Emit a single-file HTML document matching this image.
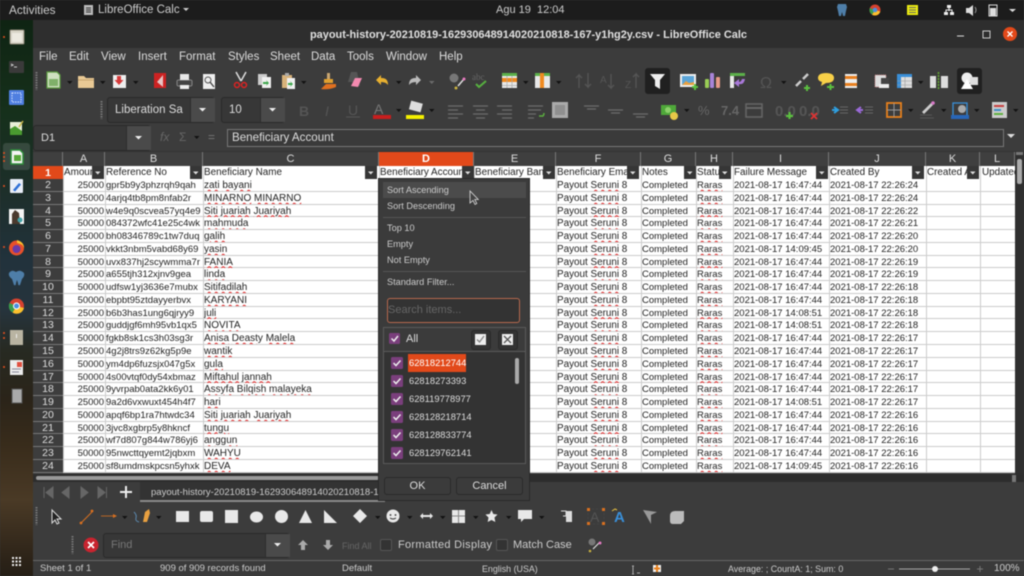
<!DOCTYPE html>
<html><head><meta charset="utf-8"><title>LibreOffice Calc</title>
<style>
html,body{margin:0;padding:0;background:#3a3a3a}
#p{position:relative;width:1024px;height:576px;overflow:hidden;font-family:"Liberation Sans",sans-serif;background:#3c3c3c;filter:blur(.4px)}
#p div,#p span{position:absolute;white-space:nowrap}
.m{top:50px;font-size:11.5px;color:#ddd;line-height:14px}
.bx{background:#373737;border:1px solid #2a2a2a;border-radius:3px;box-sizing:border-box}
.ar{background:#4a4a4a;border-left:1px solid #2d2d2d}
.ch{top:152px;height:14px;background:#3f3f3f;color:#ddd;font-size:11px;line-height:15px;text-align:center;box-sizing:border-box;border-right:1px solid #777}
.r{left:33px;width:982px;height:12.77px;background:#fff;box-shadow:inset 0 -1px 0 #ccc;font-size:9.5px;line-height:13px;color:#222}
.r span{top:0;height:12px;overflow:hidden}
.r .n{left:0;width:30px;height:12.77px;background:#3d3d3d;box-shadow:inset 0 -1px 0 #777;color:#ddd;text-align:center;font-size:10.5px}
.r .a{left:30px;width:41px;text-align:right}
.r .b{left:73px;width:97px}
.r .c{left:171px;width:170px;font-size:10px}
.r .f{left:524px;width:80px;font-size:9.9px}
.r .g{left:609px;width:54px}
.r .h{left:664px;width:35px}
.r .i{left:701px;width:94px}
.r .j{left:797px;width:95px}
.r u{text-decoration:underline wavy #e02020 1px;text-underline-offset:1px}
.v{top:166px;height:307px;width:1px;background:#ccc}
.h1{top:166px;height:13px;font-size:9.9px;line-height:14px;color:#222;background:#fff;overflow:hidden}
.fb{top:166px;width:12px;height:13px;background:#363636}
.pi{left:387px;font-size:9.2px;color:#ccc;line-height:12px}
.li{left:409px;font-size:9.4px;color:#ddd;line-height:12px}
.s{top:563px;font-size:9.5px;color:#ccc;line-height:12px}
</style></head><body><div id="p">

<!-- wallpaper dock -->
<div style="left:0;top:20px;width:33px;height:556px;background:linear-gradient(180deg,#0f2413 0,#16301b 90px,#1d2f2a 170px,#22323c 240px,#26343d 290px,#272a22 330px,#2b2419 380px,#3a2d1c 430px,#4a3a26 480px,#2c2318 540px,#1d1a14 576px)"></div>
<!-- top bar -->
<div style="left:0;top:0;width:1024px;height:20px;background:#1c1c1c"></div>
<div style="left:9px;top:3px;font-size:11.8px;color:#ccc;line-height:14px">Activities</div>
<div style="left:98px;top:3px;font-size:11.5px;color:#ccc;line-height:14px">LibreOffice Calc</div>
<div style="left:496px;top:3px;font-size:11px;color:#ccc;line-height:14px">Agu 19&nbsp;&nbsp;12:04</div>
<!-- title -->
<div style="left:33px;top:20px;width:991px;height:28px;background:#2e2e2e"></div>
<div style="left:310px;top:27.500px;font-size:10.95px;font-weight:bold;color:#e0e0e0;line-height:14px">payout-history-20210819-162930648914020210818-167-y1hg2y.csv - LibreOffice Calc</div>
<!-- menu -->
<div class="m" style="left:39px">File</div><div class="m" style="left:69px">Edit</div><div class="m" style="left:101px">View</div><div class="m" style="left:138px">Insert</div><div class="m" style="left:179px">Format</div><div class="m" style="left:228px">Styles</div><div class="m" style="left:270px">Sheet</div><div class="m" style="left:311px">Data</div><div class="m" style="left:347px">Tools</div><div class="m" style="left:386px">Window</div><div class="m" style="left:439px">Help</div>

<!-- font boxes -->
<div class="bx" style="left:107px;top:97px;width:108px;height:26px"></div><div class="ar" style="left:190px;top:98px;width:24px;height:24px"></div>
<div style="left:115px;top:103px;font-size:11.5px;color:#ddd;line-height:14px">Liberation Sa</div>
<div class="bx" style="left:221px;top:97px;width:64px;height:26px"></div><div class="ar" style="left:260px;top:98px;width:24px;height:24px"></div>
<div style="left:229px;top:103px;font-size:11.5px;color:#ddd;line-height:14px">10</div>
<!-- formula bar -->
<div class="bx" style="left:33px;top:125px;width:118px;height:26px"></div><div class="ar" style="left:126px;top:126px;width:24px;height:24px"></div>
<div style="left:41px;top:131px;font-size:11px;color:#ddd;line-height:14px">D1</div>
<div style="left:160px;top:130px;font-size:12px;font-style:italic;color:#666;line-height:14px">fx</div>
<div style="left:179px;top:130px;font-size:12px;color:#666;line-height:14px">Σ</div>
<div style="left:208px;top:130px;font-size:12px;color:#777;line-height:14px">=</div>
<div style="left:227px;top:129px;width:777px;height:18px;border:1px solid #777;box-sizing:border-box;background:#3a3a3a;font-size:11.6px;color:#ddd;line-height:16px;padding-left:4px">Beneficiary Account</div>

<!-- grid -->
<div style="left:33px;top:151px;width:991px;height:323px;background:#333"></div>
<div style="left:33px;top:152px;width:30px;height:14px;background:#3f3f3f;border-right:1px solid #777;box-sizing:border-box"></div>
<div class="ch" style="left:63px;width:42px">A</div><div class="ch" style="left:105px;width:98px">B</div><div class="ch" style="left:203px;width:176px">C</div><div class="ch" style="left:379px;width:95px;background:#e2491a;color:#fff;font-weight:bold">D</div><div class="ch" style="left:474px;width:82px">E</div><div class="ch" style="left:556px;width:85px">F</div><div class="ch" style="left:641px;width:55px">G</div><div class="ch" style="left:696px;width:37px">H</div><div class="ch" style="left:733px;width:96px">I</div><div class="ch" style="left:829px;width:97px">J</div><div class="ch" style="left:926px;width:54px">K</div><div class="ch" style="left:980px;width:35px">L</div>
<div style="left:33px;top:166px;width:30px;height:13px;background:#e2491a;color:#fff;font-weight:bold;font-size:10.5px;line-height:14px;text-align:center">1</div>
<div style="left:63px;top:166px;width:952px;height:13px;background:#fff"></div>
<div class="h1" style="left:64px;width:28px">Amount</div><div class="h1" style="left:106px;width:84px">Reference No</div><div class="h1" style="left:204px;width:160px">Beneficiary Name</div><div class="h1" style="left:380px;width:82px">Beneficiary Account</div><div class="h1" style="left:475px;width:68px">Beneficiary Bank</div><div class="h1" style="left:557px;width:70px">Beneficiary Email</div><div class="h1" style="left:642px;width:42px">Notes</div><div class="h1" style="left:697px;width:22px">Status</div><div class="h1" style="left:734px;width:82px">Failure Message</div><div class="h1" style="left:830px;width:82px">Created By</div><div class="h1" style="left:927px;width:40px">Created At</div><div class="h1" style="left:982px;width:33px">Updated At</div>
<div class="fb" style="left:92px"></div><div class="fb" style="left:190px"></div><div class="fb" style="left:365px"></div><div class="fb" style="left:462px"></div><div class="fb" style="left:543px"></div><div class="fb" style="left:627px"></div><div class="fb" style="left:684px"></div><div class="fb" style="left:719px"></div><div class="fb" style="left:816px"></div><div class="fb" style="left:912px"></div><div class="fb" style="left:967px"></div>

<div class="r" style="top:179px"><span class="n">2</span><span class="a">25000</span><span class="b">gpr5b9y3phzrqh9qah</span><span class="c"><u>zati</u> <u>bayani</u></span><span class="f">Payout <u>Seruni</u> 8</span><span class="g">Completed</span><span class="h"><u>Raras</u></span><span class="i">2021-08-17 16:47:44</span><span class="j">2021-08-17 22:26:24</span></div>
<div class="r" style="top:191.77px"><span class="n">3</span><span class="a">25000</span><span class="b">4arjq4tb8pm8nfab2r</span><span class="c"><u>MINARNO</u> <u>MINARNO</u></span><span class="f">Payout <u>Seruni</u> 8</span><span class="g">Completed</span><span class="h"><u>Raras</u></span><span class="i">2021-08-17 16:47:44</span><span class="j">2021-08-17 22:26:24</span></div>
<div class="r" style="top:204.54px"><span class="n">4</span><span class="a">50000</span><span class="b">w4e9q0scvea57yq4e9</span><span class="c"><u>Siti</u> <u>juariah</u> <u>Juariyah</u></span><span class="f">Payout <u>Seruni</u> 8</span><span class="g">Completed</span><span class="h"><u>Raras</u></span><span class="i">2021-08-17 16:47:44</span><span class="j">2021-08-17 22:26:22</span></div>
<div class="r" style="top:217.31px"><span class="n">5</span><span class="a">50000</span><span class="b">084372wfc41e25c4wk</span><span class="c"><u>mahmuda</u></span><span class="f">Payout <u>Seruni</u> 8</span><span class="g">Completed</span><span class="h"><u>Raras</u></span><span class="i">2021-08-17 16:47:44</span><span class="j">2021-08-17 22:26:21</span></div>
<div class="r" style="top:230.08px"><span class="n">6</span><span class="a">25000</span><span class="b">bh08346789c1tw7duq</span><span class="c"><u>galih</u></span><span class="f">Payout <u>Seruni</u> 8</span><span class="g">Completed</span><span class="h"><u>Raras</u></span><span class="i">2021-08-17 16:47:44</span><span class="j">2021-08-17 22:26:20</span></div>
<div class="r" style="top:242.85px"><span class="n">7</span><span class="a">25000</span><span class="b">vkkt3nbm5vabd68y69</span><span class="c"><u>yasin</u></span><span class="f">Payout <u>Seruni</u> 8</span><span class="g">Completed</span><span class="h"><u>Raras</u></span><span class="i">2021-08-17 14:09:45</span><span class="j">2021-08-17 22:26:20</span></div>
<div class="r" style="top:255.62px"><span class="n">8</span><span class="a">50000</span><span class="b">uvx837hj2scywmma7r</span><span class="c"><u>FANIA</u></span><span class="f">Payout <u>Seruni</u> 8</span><span class="g">Completed</span><span class="h"><u>Raras</u></span><span class="i">2021-08-17 16:47:44</span><span class="j">2021-08-17 22:26:19</span></div>
<div class="r" style="top:268.39px"><span class="n">9</span><span class="a">25000</span><span class="b">a655tjh312xjnv9gea</span><span class="c"><u>linda</u></span><span class="f">Payout <u>Seruni</u> 8</span><span class="g">Completed</span><span class="h"><u>Raras</u></span><span class="i">2021-08-17 16:47:44</span><span class="j">2021-08-17 22:26:19</span></div>
<div class="r" style="top:281.16px"><span class="n">10</span><span class="a">50000</span><span class="b">udfsw1yj3636e7mubx</span><span class="c"><u>Sitifadilah</u></span><span class="f">Payout <u>Seruni</u> 8</span><span class="g">Completed</span><span class="h"><u>Raras</u></span><span class="i">2021-08-17 16:47:44</span><span class="j">2021-08-17 22:26:18</span></div>
<div class="r" style="top:293.93px"><span class="n">11</span><span class="a">50000</span><span class="b">ebpbt95ztdayyerbvx</span><span class="c"><u>KARYANI</u></span><span class="f">Payout <u>Seruni</u> 8</span><span class="g">Completed</span><span class="h"><u>Raras</u></span><span class="i">2021-08-17 16:47:44</span><span class="j">2021-08-17 22:26:18</span></div>
<div class="r" style="top:306.7px"><span class="n">12</span><span class="a">25000</span><span class="b">b6b3has1ung6qjryy9</span><span class="c"><u>juli</u></span><span class="f">Payout <u>Seruni</u> 8</span><span class="g">Completed</span><span class="h"><u>Raras</u></span><span class="i">2021-08-17 14:08:51</span><span class="j">2021-08-17 22:26:18</span></div>
<div class="r" style="top:319.47px"><span class="n">13</span><span class="a">25000</span><span class="b">guddjgf6mh95vb1qx5</span><span class="c"><u>NOVITA</u></span><span class="f">Payout <u>Seruni</u> 8</span><span class="g">Completed</span><span class="h"><u>Raras</u></span><span class="i">2021-08-17 14:08:51</span><span class="j">2021-08-17 22:26:18</span></div>
<div class="r" style="top:332.24px"><span class="n">14</span><span class="a">50000</span><span class="b">fgkb8sk1cs3h03sg3r</span><span class="c"><u>Anisa</u> <u>Deasty</u> <u>Malela</u></span><span class="f">Payout <u>Seruni</u> 8</span><span class="g">Completed</span><span class="h"><u>Raras</u></span><span class="i">2021-08-17 16:47:44</span><span class="j">2021-08-17 22:26:17</span></div>
<div class="r" style="top:345.01px"><span class="n">15</span><span class="a">25000</span><span class="b">4g2j8trs9z62kg5p9e</span><span class="c"><u>wantik</u></span><span class="f">Payout <u>Seruni</u> 8</span><span class="g">Completed</span><span class="h"><u>Raras</u></span><span class="i">2021-08-17 16:47:44</span><span class="j">2021-08-17 22:26:17</span></div>
<div class="r" style="top:357.78px"><span class="n">16</span><span class="a">50000</span><span class="b">ym4dp6fuzsjx047g5x</span><span class="c"><u>gula</u></span><span class="f">Payout <u>Seruni</u> 8</span><span class="g">Completed</span><span class="h"><u>Raras</u></span><span class="i">2021-08-17 16:47:44</span><span class="j">2021-08-17 22:26:17</span></div>
<div class="r" style="top:370.55px"><span class="n">17</span><span class="a">50000</span><span class="b">4s00vtqf0dy54xbmaz</span><span class="c"><u>Miftahul</u> <u>jannah</u></span><span class="f">Payout <u>Seruni</u> 8</span><span class="g">Completed</span><span class="h"><u>Raras</u></span><span class="i">2021-08-17 16:47:44</span><span class="j">2021-08-17 22:26:17</span></div>
<div class="r" style="top:383.32px"><span class="n">18</span><span class="a">25000</span><span class="b">9yvrpab0ata2kk6y01</span><span class="c"><u>Assyfa</u> <u>Bilqish</u> <u>malayeka</u></span><span class="f">Payout <u>Seruni</u> 8</span><span class="g">Completed</span><span class="h"><u>Raras</u></span><span class="i">2021-08-17 16:47:44</span><span class="j">2021-08-17 22:26:17</span></div>
<div class="r" style="top:396.09px"><span class="n">19</span><span class="a">25000</span><span class="b">9a2d6vxwuxt454h4f7</span><span class="c"><u>hari</u></span><span class="f">Payout <u>Seruni</u> 8</span><span class="g">Completed</span><span class="h"><u>Raras</u></span><span class="i">2021-08-17 14:08:51</span><span class="j">2021-08-17 22:26:17</span></div>
<div class="r" style="top:408.86px"><span class="n">20</span><span class="a">50000</span><span class="b">apqf6bp1ra7htwdc34</span><span class="c"><u>Siti</u> <u>juariah</u> <u>Juariyah</u></span><span class="f">Payout <u>Seruni</u> 8</span><span class="g">Completed</span><span class="h"><u>Raras</u></span><span class="i">2021-08-17 16:47:44</span><span class="j">2021-08-17 22:26:16</span></div>
<div class="r" style="top:421.63px"><span class="n">21</span><span class="a">50000</span><span class="b">3jvc8xgbrp5y8hkncf</span><span class="c"><u>tungu</u></span><span class="f">Payout <u>Seruni</u> 8</span><span class="g">Completed</span><span class="h"><u>Raras</u></span><span class="i">2021-08-17 16:47:44</span><span class="j">2021-08-17 22:26:16</span></div>
<div class="r" style="top:434.4px"><span class="n">22</span><span class="a">25000</span><span class="b">wf7d807g844w786yj6</span><span class="c"><u>anggun</u></span><span class="f">Payout <u>Seruni</u> 8</span><span class="g">Completed</span><span class="h"><u>Raras</u></span><span class="i">2021-08-17 16:47:44</span><span class="j">2021-08-17 22:26:16</span></div>
<div class="r" style="top:447.17px"><span class="n">23</span><span class="a">50000</span><span class="b">95nwcttqyemt2jqbxm</span><span class="c"><u>WAHYU</u></span><span class="f">Payout <u>Seruni</u> 8</span><span class="g">Completed</span><span class="h"><u>Raras</u></span><span class="i">2021-08-17 16:47:44</span><span class="j">2021-08-17 22:26:16</span></div>
<div class="r" style="top:459.94px"><span class="n">24</span><span class="a">25000</span><span class="b">sf8umdmskpcsn5yhxk</span><span class="c"><u>DEVA</u></span><span class="f">Payout <u>Seruni</u> 8</span><span class="g">Completed</span><span class="h"><u>Raras</u></span><span class="i">2021-08-17 14:09:45</span><span class="j">2021-08-17 22:26:16</span></div>
<div style="left:33px;top:472.7px;width:982px;height:1.3px;background:#3d3d3d"></div>

<div class="v" style="left:63px"></div><div class="v" style="left:105px"></div><div class="v" style="left:203px"></div><div class="v" style="left:379px"></div><div class="v" style="left:474px"></div><div class="v" style="left:556px"></div><div class="v" style="left:641px"></div><div class="v" style="left:696px"></div><div class="v" style="left:733px"></div><div class="v" style="left:829px"></div><div class="v" style="left:926px"></div><div class="v" style="left:980px"></div>
<!-- v scrollbar -->
<div style="left:1015px;top:152px;width:9px;height:322px;background:#2f2f2f"></div>
<div style="left:1017px;top:159px;width:5px;height:25px;background:#aaa;border-radius:2px"></div>
<div style="left:1016px;top:152px;width:7px;height:3px;background:#777"></div>

<!-- bottom area -->
<div style="left:33px;top:474px;width:991px;height:8px;background:#2d2d2d"></div>
<div style="left:36px;top:476px;width:343px;height:4px;background:#999;border-radius:2px"></div>
<div style="left:1012px;top:475px;width:4px;height:7px;background:#777"></div>
<div style="left:33px;top:482px;width:991px;height:78px;background:#3c3c3c"></div>
<div style="left:140px;top:482px;width:245px;height:18px;background:#333"></div>
<div style="left:140px;top:500px;width:245px;height:2px;background:#8a8a8a"></div>
<div style="left:151px;top:486.500px;font-size:9.5px;color:#ccc;line-height:12px;width:228px;overflow:hidden">payout-history-20210819-162930648914020210818-167-y1hg2y.csv</div>
<!-- find box -->
<div class="bx" style="left:103px;top:533px;width:187px;height:25px"></div><div class="ar" style="left:265px;top:534px;width:24px;height:23px"></div>
<div style="left:111px;top:539px;font-size:11px;color:#777;line-height:13px">Find</div>
<div style="left:342px;top:540px;font-size:9px;color:#666;line-height:12px">Find All</div>
<div style="left:380px;top:539px;width:12px;height:12px;background:#333;border:1px solid #555;box-sizing:border-box;border-radius:2px"></div>
<div style="left:398px;top:539px;font-size:11px;letter-spacing:.3px;color:#ccc;line-height:13px">Formatted Display</div>
<div style="left:496px;top:539px;width:12px;height:12px;background:#333;border:1px solid #555;box-sizing:border-box;border-radius:2px"></div>
<div style="left:513px;top:539px;font-size:11px;color:#ccc;line-height:13px">Match Case</div>
<!-- status -->
<div style="left:33px;top:560px;width:991px;height:1px;background:#666"></div>
<div style="left:33px;top:561px;width:991px;height:15px;background:#3a3a3a"></div>
<div class="s" style="left:40px">Sheet 1 of 1</div><div class="s" style="left:160px">909 of 909 records found</div><div class="s" style="left:342px">Default</div><div class="s" style="left:482px;font-size:8.9px">English (USA)</div><div class="s" style="left:728px;font-size:8.9px">Average: ; CountA: 1; Sum: 0</div><div class="s" style="left:994px;font-size:10px">100%</div>

<!-- icons -->
<svg width="1024" height="576" viewBox="0 0 1024 576" style="position:absolute;left:0;top:0">
<defs><path id="d" d="M0 0h5.5l-2.75 3z" fill="#111"/><path id="a" d="M0 0h5.5l-2.75 3z" fill="#ddd"/><path id="w" d="M0 0h7l-3.5 3.5z" fill="#eee"/></defs>
<!-- top bar -->
<rect x="84" y="5" width="9" height="10" fill="#bbb"/><path d="M86 8h5M86 10h5M86 12h5" stroke="#333"/>
<path d="M183 8h6l-3 3z" fill="#ccc"/>
<path d="M838 4h8l1 3-1 4-1 5h-2l-1-4-1 4h-2l-1-5-1-4z" fill="#4e7ea8"/>
<circle cx="875" cy="10" r="5.5" fill="#d6422f"/><path d="M875 10L880.300 11.500A5.500 5.500 0 0 1 872 14.600z" fill="#fbc02d"/><path d="M875 10L872 14.600A5.500 5.500 0 0 1 869.800 8z" fill="#3a9d4c"/><circle cx="875" cy="10" r="2.300" fill="#4a8fe0"/>
<rect x="907" y="5" width="11" height="10" fill="#ecec10"/><path d="M909 7.500h7M909 10h7M909 12.500h7" stroke="#666"/>
<path d="M947 5h4v3h-4zM944 12h4v3h-4zM950 12h4v3h-4zM946 10h6" fill="#eee"/><path d="M949 8v3M946 12v-2h6v2" stroke="#eee" fill="none"/>
<path d="M966 8h3l4-3v11l-4-3h-3z" fill="#ddd"/><path d="M975 7q2 3 0 6" stroke="#999" fill="none"/>
<rect x="989" y="5" width="8" height="11" fill="none" stroke="#ddd"/><rect x="990" y="8" width="6" height="8" fill="#ddd"/><path d="M1009 9h7l-3.500 3z" fill="#ddd"/>
<!-- window buttons -->
<path d="M957 36h7" stroke="#ddd"/><rect x="983" y="31" width="7" height="7" fill="none" stroke="#ccc"/>
<circle cx="1010" cy="34" r="7" fill="#e2491a"/><path d="M1007.500 31.500l5 5M1012.500 31.500l-5 5" stroke="#fff" stroke-width="1.300"/>
<!-- dock -->
<rect x="3" y="143" width="27" height="27" rx="3" fill="#fff" opacity=".13"/>
<g fill="#e8501f"><circle cx="4" cy="37" r="1"/><circle cx="4" cy="153" r="1"/><circle cx="4" cy="157" r="1"/><circle cx="4" cy="161" r="1"/><circle cx="4" cy="186" r="1"/><circle cx="4" cy="247" r="1"/><circle cx="4" cy="333" r="1"/><circle cx="4" cy="338" r="1"/><circle cx="4" cy="367" r="1"/></g>
<rect x="10" y="30" width="14" height="14" rx="1" fill="#d9d5c8" stroke="#8c8676"/><rect x="12" y="33" width="10" height="9" fill="#ece9df"/>
<rect x="9" y="61" width="15" height="12" rx="1" fill="#3a3a3a"/><path d="M11 64l2 1-2 1M14 67h3" stroke="#ccc" fill="none"/>
<rect x="9" y="90" width="15" height="15" rx="1" fill="#4f7fe0"/><rect x="12" y="93" width="9" height="9" fill="none" stroke="#cfe0ff" stroke-dasharray="1.500 1"/>
<path d="M10 122h12v13H10z" fill="#e8efd8"/><path d="M10 135v-6l5-3 7 5v4z" fill="#4a9a30"/><path d="M19 127l4-6" stroke="#c9b84a" stroke-width="1.500"/>
<path d="M11 150h9l3 3v11H11z" fill="#f4f4f4" stroke="#2f8f3b" stroke-width="1.500"/><rect x="14" y="155" width="7" height="6" fill="#57a83a"/>
<rect x="10" y="179" width="13" height="14" rx="1" fill="#e8eef8"/><path d="M13 190l6-7 2 1.500-6 7z" fill="#2d6fd6"/>
<rect x="9" y="209" width="15" height="15" fill="#f4f4f4"/><path d="M12 224v-10l3-4 4 3 1 11z" fill="#4a3a2e"/><circle cx="20" cy="220" r="2.500" fill="#45a3a8"/>
<circle cx="16.500" cy="248" r="7.500" fill="#e8502a"/><circle cx="16.500" cy="249" r="4" fill="#6a3aa8"/><path d="M17 240q7 2 7 8-1-4-7-5z" fill="#fbbf2d"/>
<path d="M9 273q3-4 7-1 4-3 8 1 1 3-2 6-1 3-2 6-2 1-2-2l-1-3-1 3q0 3-2 2-1-3-2-6-4-3-3-6z" fill="#4e7ea8"/>
<circle cx="16.500" cy="306" r="7.500" fill="#d6422f"/><path d="M16.500 306L24 308A7.500 7.500 0 0 1 12.500 312.500z" fill="#fbc02d"/><path d="M16.500 306L12.500 312.500A7.500 7.500 0 0 1 9.500 303z" fill="#3a9d4c"/><circle cx="16.500" cy="306" r="3" fill="#4a8fe0" stroke="#fff"/>
<rect x="10" y="330" width="13" height="15" fill="#b9b4a2"/><path d="M16.500 334v4" stroke="#eee"/>
<rect x="10" y="360" width="13" height="15" fill="#ececec"/><rect x="17" y="362" width="5" height="5" fill="#e05040"/><path d="M12 369h9M12 372h7" stroke="#889"/>
<rect x="12" y="389" width="10" height="14" fill="#aaa" stroke="#555"/>
<g fill="#eee"><rect x="12" y="557" width="2" height="2"/><rect x="15.500" y="557" width="2" height="2"/><rect x="19" y="557" width="2" height="2"/><rect x="12" y="560.500" width="2" height="2"/><rect x="15.500" y="560.500" width="2" height="2"/><rect x="19" y="560.500" width="2" height="2"/><rect x="12" y="564" width="2" height="2"/><rect x="15.500" y="564" width="2" height="2"/><rect x="19" y="564" width="2" height="2"/></g>
<!-- grips -->
<path d="M36.500 72v18M101.500 101v18M72.500 536v18M36.500 507v18" stroke="#777" stroke-width="2" stroke-dasharray="1.500 1"/>
<!-- row 1 -->
<path d="M47 72h10l3 3v13H47z" fill="#cfe0c0" stroke="#5b9a3f" stroke-width="1.200"/><rect x="49" y="79" width="9" height="7" fill="#7fb069"/>
<use href="#d" x="67" y="81"/>
<path d="M78 76h6l2 2h8v10H78z" fill="#e9c995"/><path d="M78 80h16" stroke="#c9a670"/>
<use href="#d" x="100" y="81"/>
<rect x="113" y="75" width="13" height="13" fill="#eee"/><path d="M117 76h4v4h2.500l-4.500 5-4.500-5h2.500z" fill="#d53a3a"/>
<use href="#d" x="133" y="81"/>
<path d="M154 73h12v15h-12z" fill="#c22"/><path d="M157 82l6-7v12z" fill="#eee" opacity=".8"/>
<rect x="177" y="80" width="15" height="6" rx="1" fill="#444" stroke="#ccc" stroke-width=".5"/><rect x="180" y="74" width="9" height="6" fill="#e8e8e8"/><rect x="180" y="85" width="9" height="4" fill="#eee"/>
<rect x="203" y="74" width="12" height="15" fill="#eee"/><circle cx="208" cy="80" r="3" fill="none" stroke="#555"/><path d="M210 82l4 5" stroke="#444" stroke-width="1.400"/>
<path d="M236 72l5 9M246 72l-5 9" stroke="#ddd" stroke-width="1.500"/><circle cx="237" cy="85" r="2.500" fill="none" stroke="#d22" stroke-width="1.500"/><circle cx="244" cy="85" r="2.500" fill="none" stroke="#d22" stroke-width="1.500"/>
<rect x="258" y="74" width="9" height="11" fill="#ccc"/><rect x="262" y="77" width="9" height="11" fill="#f0f0f0"/><path d="M263 82h4l-1-2 3 3-3 3 1-2h-4z" fill="#3ca54a"/>
<rect x="282" y="75" width="10" height="13" fill="#d8b27a"/><rect x="285" y="73" width="4" height="3" fill="#aaa"/><rect x="287" y="78" width="8" height="11" fill="#f0f0f0"/><path d="M288 83h3l-1-2 3 3-3 3 1-2h-3z" fill="#3ca54a"/>
<use href="#d" x="301" y="81"/>
<path d="M327 73h3v6h-3z" fill="#c9a670"/><path d="M324 79h9v4h-9z" fill="#e0a030"/><path d="M321 89q8 1 15-2v-3h-10z" fill="#e07020"/>
<path d="M351 72h6l3 14h-6l-1-4h-5z" fill="#555"/><path d="M351 86l4-8h7l-4 9z" fill="#f48ab0"/>
<path d="M376 80l5-5v3h1q6 0 6 7-2-3-7-3v3z" fill="#e8b030"/><use href="#d" x="396" y="81"/>
<path d="M421 80l-5-5v3h-1q-6 0-6 7 2-3 7-3v3z" fill="#bbb"/><use href="#a" x="429" y="81" opacity=".3"/>
<circle cx="454" cy="78" r="4.500" fill="#777"/><path d="M458 86l6-7" stroke="#ddd" stroke-width="1.500"/><circle cx="464" cy="79" r="1.500" fill="#e87ac0"/><circle cx="456" cy="88" r="1.500" fill="#c8b040"/>
<text x="472" y="80" font-size="9" font-family="Liberation Serif" fill="#666">abc</text><path d="M476 84l3 3 7-6" stroke="#57b040" stroke-width="2" fill="none"/>
<rect x="502" y="73" width="15" height="15" fill="#e8e8e8"/><rect x="502" y="73" width="15" height="3" fill="#5cb04a"/><rect x="502" y="78" width="15" height="4" fill="#ef8a20"/><path d="M502 85.500h15M507 76v12M512 76v12" stroke="#aaa" stroke-width=".7"/><use href="#d" x="523" y="81"/>
<rect x="535" y="73" width="15" height="15" fill="#e8e8e8"/><rect x="535" y="73" width="15" height="3" fill="#5cb04a"/><rect x="540" y="73" width="4" height="15" fill="#ef8a20"/><use href="#d" x="556" y="81"/>
<path d="M579 88V75l-3 3M579 75l3 3M588 73v14l-3-3M588 87l3-3" stroke="#555" stroke-width="1.300" fill="none"/>
<text x="600" y="83" font-size="10" fill="#555">A</text><path d="M611 74v14l-3-3M611 88l3-3" stroke="#555" fill="none" stroke-width="1.300"/>
<text x="625" y="88" font-size="10" fill="#555">Z</text><path d="M636 88V74l-3 3M636 74l3 3" stroke="#555" fill="none" stroke-width="1.300"/>
<rect x="645" y="68" width="25" height="26" rx="3" fill="#202020"/><path d="M650 74h15l-5 6v9l-5-3v-6z" fill="#eee"/>
<rect x="680" y="74" width="16" height="13" fill="#eee"/><rect x="682" y="76" width="12" height="9" fill="#5ba5d8"/><path d="M682 85l4-4 3 2 5-1v3z" fill="#e8a040"/><path d="M692 87h6M695 84v6" stroke="#5cc040" stroke-width="2"/>
<rect x="705" y="79" width="4" height="9" fill="#9c5" rx="1"/><rect x="710" y="73" width="4" height="15" fill="#a884d8" rx="1"/><rect x="716" y="77" width="4" height="11" fill="#e89a88" rx="1"/>
<rect x="730" y="73" width="15" height="3" fill="#5cb04a"/><rect x="730" y="76" width="4" height="12" fill="#e8e8e8"/><path d="M745 79q-1 6-6 5v3l-5-4 5-4v3q2 0 3-3z" fill="#a878d8"/>
<text x="760" y="88" font-size="16" fill="#555">Ω</text><use href="#d" x="781" y="81"/>
<path d="M796 86l5-5M803 79l5-5" stroke="#ccc" stroke-width="2.500" fill="none"/><path d="M804 88h6M807 85v6" stroke="#5cc040" stroke-width="2"/>
<path d="M818 78q0-5 8-5t8 5-8 5l-5 3 1-4q-4-1-4-4z" fill="#f8d048"/><path d="M827 87h7M830.500 84v6" stroke="#5cc040" stroke-width="2"/>
<rect x="845" y="74" width="12" height="14" fill="#eee"/><rect x="845" y="76" width="12" height="3" fill="#e88020"/><rect x="845" y="83" width="12" height="3" fill="#e88020"/>
<rect x="875" y="75" width="11" height="12" fill="#ddd" stroke="#c88"  stroke-dasharray="1 1"/><rect x="881" y="78" width="8" height="6" fill="#444"/><rect x="879" y="84" width="10" height="4" fill="#eee"/>
<rect x="897" y="74" width="15" height="14" fill="#ddd"/><rect x="897" y="74" width="15" height="3" fill="#3a8fd8"/><rect x="897" y="74" width="4" height="14" fill="#3a8fd8"/><path d="M897 81h15M897 85h15M905 77v11" stroke="#999" stroke-width=".6"/><use href="#d" x="918" y="81"/>
<rect x="930" y="76" width="6" height="12" fill="#ddd"/><rect x="941" y="76" width="7" height="12" fill="#ddd"/><path d="M938.500 72v17" stroke="#6a3" stroke-dasharray="2 1" stroke-width="1.500"/>
<rect x="957" y="68" width="25" height="26" rx="3" fill="#202020"/><circle cx="967" cy="78" r="5.500" fill="#eee"/><rect x="970" y="77" width="8" height="8" fill="#ddd"/><path d="M967 79l6 10h-12z" fill="#fff"/>
<!-- row 2 arrows -->
<use href="#w" x="199" y="108"/><use href="#w" x="269" y="108"/><use href="#w" x="135" y="136"/><use href="#w" x="274" y="543"/>
<text x="299" y="116" font-size="14" font-weight="bold" fill="#555">B</text><text x="325" y="116" font-size="14" font-style="italic" fill="#555">I</text><text x="348" y="115" font-size="14" fill="#555">U</text><path d="M346 117h14" stroke="#555"/>
<text x="374" y="114" font-size="14" fill="#777">A</text><rect x="373" y="115" width="18" height="4" fill="#c81e1e"/><use href="#d" x="396" y="109"/>
<rect x="410" y="102" width="12" height="9" fill="#ddd" transform="rotate(15 416 106)"/><rect x="406" y="115" width="18" height="4" fill="#f4f000"/><use href="#d" x="429" y="109"/>
<path d="M448 106h15M448 110h10M448 114h15M448 118h10M473 106h15M476 110h9M473 114h15M476 118h9M497 106h15M502 110h10M497 114h15M502 118h10" stroke="#6c6c6c" stroke-width="1.300"/>
<path d="M528 106h15M528 110h13M528 114h8M528 118h6" stroke="#6c6c6c" stroke-width="1.300"/><path d="M539 116h4q1-1 1-3" stroke="#5cb040" fill="none" stroke-width="1.500"/>
<rect x="552" y="102" width="16" height="16" fill="#aaa"/><rect x="555" y="105" width="10" height="10" fill="#8f8f8f"/>
<path d="M584 106h15M587 109h9M608 110h15M611 113h9M633 114h15M636 117h9" stroke="#6c6c6c" stroke-width="1.300"/>
<rect x="661" y="105" width="15" height="10" fill="#4fa83a"/><circle cx="668" cy="110" r="3" fill="#8bd06a"/><circle cx="674" cy="116" r="4" fill="#e8c848"/>
<use href="#d" x="684" y="109"/>
<text x="698" y="115" font-size="13" fill="#666">%</text><text x="721" y="115" font-size="13" font-weight="bold" fill="#666">7.4</text><rect x="746" y="104" width="16" height="13" fill="none" stroke="#666" stroke-width="1.500"/><path d="M746 108h16" stroke="#666" stroke-width="2"/>
<text x="775" y="116" font-size="15" font-weight="bold" fill="#555">0.0</text><path d="M786 116h7M789.500 112v7" stroke="#5cc040" stroke-width="2.200"/>
<text x="799" y="116" font-size="15" font-weight="bold" fill="#555">0.0</text><path d="M811 113l6 6M817 113l-6 6" stroke="#d33" stroke-width="1.800"/>
<path d="M832 110h5M834 107l4 3-4 3" stroke="#2f9fe0" stroke-width="2" fill="none"/><path d="M840 107h8M840 110h8M840 113h8" stroke="#666"/>
<path d="M863 110h-5M861 107l-4 3 4 3" stroke="#9a6ad8" stroke-width="2" fill="none"/><path d="M865 107h8M865 110h8M865 113h8" stroke="#666"/>
<rect x="887" y="103" width="14" height="14" fill="none" stroke="#e8801c" stroke-width="1.800"/><path d="M894 103v14M887 110h14" stroke="#999"/><use href="#d" x="908" y="109"/>
<path d="M922 112l9-9 2 2-9 9z" fill="#ccc"/><circle cx="933" cy="103" r="1.800" fill="#d878c8"/><path d="M920 115h12M920 118h14" stroke="#555"/><use href="#d" x="941" y="109"/>
<rect x="953" y="103" width="14" height="14" fill="none" stroke="#3a8fd8" stroke-width="1.300"/><rect x="951" y="115" width="18" height="4" fill="#2866b8"/><circle cx="962" cy="109" r="4" fill="#aaa"/><use href="#d" x="974" y="109"/>
<rect x="992" y="102" width="15" height="16" fill="#ccc"/><rect x="994" y="105" width="10" height="2" fill="#c84040"/><rect x="994" y="109" width="7" height="2" fill="#4090c8"/><rect x="994" y="113" width="9" height="2" fill="#60b040"/><use href="#d" x="1013" y="109"/>
<!-- formula row -->
<use href="#d" x="194" y="136"/><path d="M1007 135h8l-4 4z" fill="#ddd" transform="translate(0 -1)"/>
<!-- autofilter arrows -->
<use href="#a" x="95" y="171.500"/><use href="#a" x="193" y="171.500"/><use href="#a" x="368" y="171.500"/><use href="#a" x="465" y="171.500"/><use href="#a" x="546" y="171.500"/><use href="#a" x="630" y="171.500"/><use href="#a" x="687" y="171.500"/><use href="#a" x="722" y="171.500"/><use href="#a" x="819" y="171.500"/><use href="#a" x="915" y="171.500"/><use href="#a" x="970" y="171.500"/>
<!-- sheet nav -->
<path d="M44 487v11M53 487l-7 5.500 7 5.500zM69 487l-7 5.500 7 5.500zM81 487l7 5.500-7 5.500zM98 487l7 5.500-7 5.500zM106.500 487v11" fill="#666" stroke="#666"/>
<path d="M126 486v12M120 492h12" stroke="#eee" stroke-width="2"/>
<!-- draw toolbar -->
<path d="M52 510v13l3-3 2 4 2-1-2-4h4z" fill="#222" stroke="#ddd"/>
<path d="M81 523l12-12" stroke="#d87020" stroke-width="1"/><circle cx="81" cy="523" r="1.400" fill="#d87020"/><circle cx="92" cy="511" r="1.400" fill="#d87020"/>
<path d="M101 516h14" stroke="#d87020" stroke-width=".8"/><path d="M113 514l4 2-4 2z" fill="#d87020"/><use href="#d" x="122" y="516"/>
<path d="M134 512q3 3 2 6t3 4" stroke="#5c8ab0" fill="none"/><path d="M143 522l2-10 4-3 1 4-3 9z" fill="#e8a040"/><use href="#d" x="156" y="516"/>
<g fill="#e8e8e8"><rect x="176" y="511" width="13" height="11"/><rect x="200" y="511" width="13" height="11" rx="2"/><rect x="225" y="510" width="13" height="13"/><ellipse cx="256.500" cy="517" rx="6.500" ry="5.500"/><circle cx="281.500" cy="516.500" r="6.500"/><path d="M305.500 510l6.500 13h-13zM324 510l13 13h-13zM360 509l7 7-7 7-7-7z"/><circle cx="393" cy="516" r="6.500"/><path d="M420 516l3-3v2h7v-2l3 3-3 3v-2h-7v2zM452 510h13v13h-13zM491.500 510l1.800 4 4.200.5-3 3 .8 4.500-3.800-2-3.800 2 .8-4.500-3-3 4.200-.5zM518 510h14v9h-8l-3 3v-3h-3z"/></g>
<circle cx="390.500" cy="515" r=".9" fill="#333"/><circle cx="395.500" cy="515" r=".9" fill="#333"/><path d="M390 518q3 2 6 0" stroke="#333" fill="none"/>
<path d="M458.500 510v13M452 516h13" stroke="#888"/>
<use href="#d" x="375" y="516"/><use href="#d" x="407" y="516"/><use href="#d" x="440" y="516"/><use href="#d" x="473" y="516"/><use href="#d" x="506" y="516"/><use href="#d" x="539" y="516"/>
<rect x="566" y="511" width="6" height="11" fill="#ddd"/><path d="M561 511h5v5h-3" stroke="#ddd" fill="none"/>
<rect x="588" y="509" width="16" height="15" fill="none" stroke="#444" stroke-dasharray="2 2"/><text x="590" y="522" font-size="14" fill="#555">A</text><g fill="#d87020"><rect x="587" y="508" width="3" height="3"/><rect x="602" y="508" width="3" height="3"/><rect x="587" y="522" width="3" height="3"/><rect x="602" y="522" width="3" height="3"/></g>
<text x="614" y="522" font-size="15" font-weight="bold" fill="#3a8fd8">A</text><path d="M612 511l3-2 2 1" stroke="#e8c040" fill="none"/>
<path d="M643 510l14 2-6 3v9l-5-9z" fill="#999"/><path d="M670 516q0-5 5-5h9v10l-3 3h-8q-3 0-3-3z" fill="#bbb"/>
<!-- find bar -->
<circle cx="91" cy="545" r="7.500" fill="#c8242f"/><path d="M88 542l6 6M94 542l-6 6" stroke="#fff" stroke-width="1.700"/>
<path d="M303 540l5 5h-3v5h-4v-5h-3z" fill="#aaa"/><path d="M328 550l-5-5h3v-5h4v5h3z" fill="#aaa"/>
<circle cx="592" cy="542" r="3.500" fill="#777"/><path d="M593 549l6-6" stroke="#ddd" stroke-width="1.200"/><circle cx="600" cy="543" r="1.500" fill="#e07ac0"/><circle cx="590" cy="551" r="1.300" fill="#c8b040"/>
<!-- status icons -->
<path d="M632 566h2M632 574h2M633 566v8M637 573h3" stroke="#aaa"/><rect x="653" y="565" width="8" height="7" fill="#eee"/><path d="M657 565v7M654 568.500h6" stroke="#e8801c" stroke-width="2"/>
<path d="M888 569h6M983 569h-6M980 566v6" stroke="#777" stroke-width="1"/><path d="M899 569h71" stroke="#aaa"/><circle cx="935" cy="569" r="3" fill="#eee"/>
</svg>

<!-- popup -->
<div style="left:379px;top:179px;width:150px;height:321px;background:#3b3b3b;box-shadow:0 0 0 1px #2a2a2a"></div>
<div style="left:383px;top:182px;width:143px;height:16px;background:#4b4b4b"></div>
<div class="pi" style="top:184px">Sort Ascending</div><div class="pi" style="top:200px">Sort Descending</div>
<div style="left:383px;top:217px;width:143px;height:1px;background:#555"></div>
<div class="pi" style="top:222px">Top 10</div><div class="pi" style="top:238px">Empty</div><div class="pi" style="top:254px">Not Empty</div>
<div style="left:383px;top:271px;width:143px;height:1px;background:#555"></div>
<div class="pi" style="top:276px">Standard Filter...</div>
<div style="left:387px;top:298px;width:133px;height:25px;border:1px solid #b8694e;border-radius:3px;box-sizing:border-box;background:#333"></div>
<div style="left:388px;top:304px;font-size:11px;color:#666;line-height:13px">Search items...</div>
<div style="left:383px;top:327px;width:143px;height:137px;border:1px solid #5a5a5a;box-sizing:border-box;background:#3b3b3b"></div>
<div style="left:384px;top:351px;width:141px;height:112px;background:#333;border-top:1px solid #5a5a5a;box-sizing:border-box"></div>
<div style="left:406px;top:332px;font-size:11px;color:#ddd;line-height:14px">All</div>
<div style="left:471px;top:330px;width:20px;height:20px;background:#333;border:1px solid #2a2a2a;border-radius:3px;box-sizing:border-box"></div>
<div style="left:498px;top:330px;width:20px;height:20px;background:#333;border:1px solid #2a2a2a;border-radius:3px;box-sizing:border-box"></div>
<div style="left:408px;top:354px;width:58px;height:18px;background:#e2491a"></div>
<div class="li" style="top:357px;color:#fff">62818212744</div><div class="li" style="top:375px">62818273393</div><div class="li" style="top:393px">628119778977</div><div class="li" style="top:411px">628128218714</div><div class="li" style="top:429px">628128833774</div><div class="li" style="top:447px">628129762141</div>
<div style="left:515px;top:358px;width:4px;height:26px;background:#aaa;border-radius:2px"></div>
<div style="left:384px;top:477px;width:67px;height:18px;background:#3b3b3b;border:1px solid #2a2a2a;border-radius:3px;box-sizing:border-box;text-align:center;font-size:11px;color:#ddd;line-height:16px">OK</div>
<div style="left:456px;top:477px;width:67px;height:18px;background:#3b3b3b;border:1px solid #2a2a2a;border-radius:3px;box-sizing:border-box;text-align:center;font-size:11px;color:#ddd;line-height:16px">Cancel</div>
<svg width="1024" height="576" viewBox="0 0 1024 576" style="position:absolute;left:0;top:0">
<g fill="#7a3f7c"><rect x="389" y="333" width="11" height="11" rx="1.500"/><rect x="391" y="357" width="12" height="12" rx="1.500"/><rect x="391" y="375" width="12" height="12" rx="1.500"/><rect x="391" y="393" width="12" height="12" rx="1.500"/><rect x="391" y="411" width="12" height="12" rx="1.500"/><rect x="391" y="429" width="12" height="12" rx="1.500"/><rect x="391" y="447" width="12" height="12" rx="1.500"/></g>
<g stroke="#eee" stroke-width="1.500" fill="none"><path d="M391.500 338.500l2.500 2.500 4-5"/><path d="M393.500 363l2.500 2.500 4.500-5"/><path d="M393.500 381l2.500 2.500 4.500-5"/><path d="M393.500 399l2.500 2.500 4.500-5"/><path d="M393.500 417l2.500 2.500 4.500-5"/><path d="M393.500 435l2.500 2.500 4.500-5"/><path d="M393.500 453l2.500 2.500 4.500-5"/></g>
<rect x="475" y="334" width="11" height="11" fill="#eee"/><path d="M477 339.500l2.500 2.500 4.500-6" stroke="#888" stroke-width="1.300" fill="none"/>
<rect x="502" y="334" width="11" height="11" fill="#eee"/><path d="M504 336l7 7M511 336l-7 7" stroke="#555" stroke-width="1.300"/>
<path d="M470 191v12l3-2.500 2 4 1.800-1-2-4h3.500z" fill="#444" stroke="#ddd" stroke-width=".8"/>
</svg>
</div></body></html>
